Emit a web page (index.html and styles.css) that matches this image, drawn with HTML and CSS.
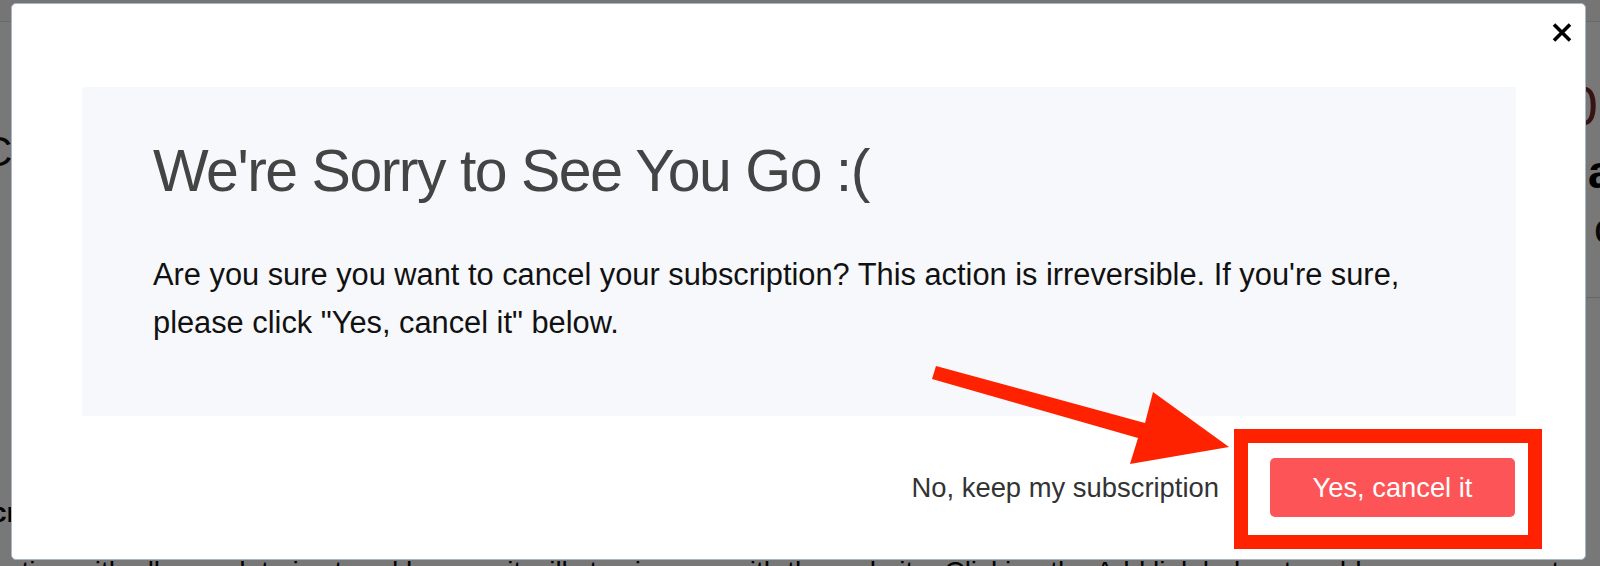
FILE: index.html
```html
<!DOCTYPE html>
<html lang="en">
<head>
<meta charset="utf-8">
<title>Cancel subscription</title>
<link rel="stylesheet" href="styles.css">
</head>
<body>
  <div class="page">
    <header class="topbar"></header>
    <div class="page-body">
      <div class="col-left">
        <div class="page-title">C</div>
        <div class="left-label">cr</div>
      </div>
      <div class="col-main"></div>
      <div class="col-right">
        <div class="price">0</div>
        <div class="plan-name">a</div>
        <div class="plan-detail">c</div>
        <div class="divider"></div>
      </div>
    </div>
    <p class="page-note">ation with all your data is stored here so it will stay in sync with the website. Clicking the Add link below to add a new payment method to your account.</p>
  </div>

  <div class="overlay"></div>

  <div class="modal" role="dialog">
    <button class="close" aria-label="Close">
      <svg width="20" height="19" viewBox="0 0 20 19"><path d="M2 1.5 L18 17.5 M18 1.5 L2 17.5" stroke="#000" stroke-width="3.6" fill="none"/></svg>
    </button>
    <div class="panel">
      <h2 class="title">We're Sorry to See You Go :(</h2>
      <p class="message">Are you sure you want to cancel your subscription? This action is irreversible. If you're sure, please click "Yes, cancel it" below.</p>
    </div>
    <div class="actions">
      <span class="keep">No, keep my subscription</span>
      <div class="highlight">
        <button class="confirm">Yes, cancel it</button>
        <div class="highlight-frame"></div>
      </div>
    </div>
  </div>

  <svg class="arrow" width="320" height="110" viewBox="0 0 320 110">
    <polygon points="11,6 220,63 228,32 304,87 205,104 213,78 7,19" fill="#ff2200"/>
  </svg>
</body>
</html>
```

FILE: styles.css
```css
* { box-sizing: border-box; }

html, body {
  margin: 0;
  padding: 0;
  width: 1600px;
  height: 566px;
  overflow: hidden;
  background: #fff;
  font-family: "Liberation Sans", Arial, Helvetica, sans-serif;
}

/* ---------- page behind the dialog ---------- */
.page {
  width: 1600px;
  height: 566px;
  overflow: hidden;
}

.topbar {
  height: 22px;
  background: #f8f8f8;
  border-bottom: 1px solid #e2e2e2;
}

.page-body {
  display: flex;
  height: 534px;
}

.col-left {
  width: 11px;
  flex: none;
}

.page-title {
  margin: 106px 0 0 -18px;
  font-size: 42px;
  line-height: 48px;
  color: #111;
  white-space: nowrap;
}

.left-label {
  margin: 321px 0 0 -9px;
  font-size: 28px;
  line-height: 32px;
  font-weight: 700;
  color: #000;
  white-space: nowrap;
}

.col-main { flex: 1; }

.col-right {
  width: 14px;
  flex: none;
}

.price {
  display: flex;
  justify-content: flex-end;
  margin: 56px 2px 0 0;
  font-size: 56px;
  line-height: 56px;
  color: #7a2a2a;
  white-space: nowrap;
}

.plan-name {
  margin: 13px 0 0 2px;
  font-size: 46px;
  line-height: 50px;
  font-weight: 700;
  color: #000;
  white-space: nowrap;
}

.plan-detail {
  margin: 6px 0 0 8px;
  font-size: 43px;
  line-height: 50px;
  color: #111;
  white-space: nowrap;
}

.divider {
  margin-top: 44px;
  height: 1px;
  background: #dcdcdc;
}

.page-note {
  margin: 0;
  padding-left: 6px;
  font-size: 28px;
  line-height: 32px;
  color: #000;
  white-space: nowrap;
}

.overlay {
  position: fixed;
  inset: 0;
  background: rgba(0, 0, 0, 0.53);
}

/* ---------- dialog ---------- */
.modal {
  position: absolute;
  left: 11px;
  top: 3px;
  width: 1575px;
  height: 557px;
  background: #fff;
  border: 1px solid #aab6c4;
  border-radius: 5px;
  padding: 83px 69px 0 70px;
}

.close {
  position: absolute;
  top: 19px;
  right: 13px;
  width: 20px;
  height: 19px;
  padding: 0;
  border: 0;
  background: none;
  display: flex;
}

.panel {
  background: #f7f8fc;
  height: 329px;
  padding: 52px 71px 0 71px;
}

.title {
  margin: 0;
  font-size: 59px;
  line-height: 64px;
  letter-spacing: -1.5px;
  font-weight: 400;
  color: #444;
}

.message {
  margin: 48px 0 0;
  font-size: 30.8px;
  line-height: 48px;
  color: #111;
}

.actions {
  display: flex;
  justify-content: flex-end;
  align-items: center;
  gap: 51px;
  margin: 42px 1px 0 0;
}

.keep {
  font-size: 27.4px;
  line-height: 59px;
  color: #333;
}

.highlight {
  position: relative;
}

.confirm {
  display: block;
  height: 59px;
  width: 245px;
  padding: 0;
  border: 0;
  border-radius: 5px;
  background: #fc5457;
  color: #fff;
  font-family: "Liberation Sans", Arial, Helvetica, sans-serif;
  font-size: 27.3px;
  line-height: 59px;
  text-align: center;
}

.highlight-frame {
  position: absolute;
  top: -29px;
  right: -27px;
  bottom: -32px;
  left: -36px;
  border: 14px solid #ff2200;
}

.arrow {
  position: absolute;
  left: 925px;
  top: 360px;
}
```
